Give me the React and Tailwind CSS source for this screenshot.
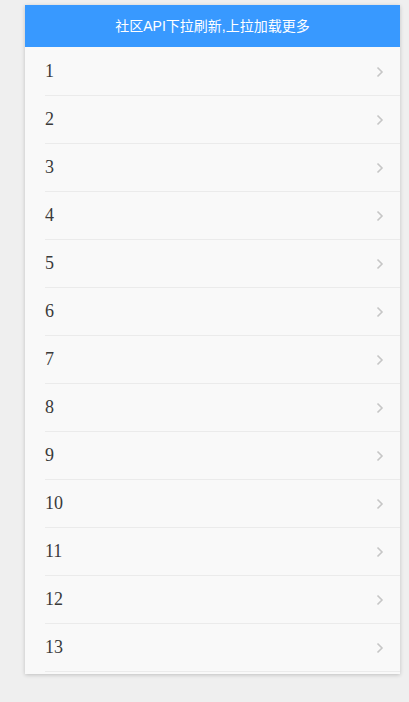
import React from "react";

const items = Array.from({ length: 13 }, (_, i) => i + 1);

export default function App() {
  return (
    <div className="min-h-[702px] w-[409px] bg-[#efefef] pt-[5px] pl-[25px]">
      <div className="w-[375px] bg-[#f9f9f9] pb-[2px] shadow-[0_1px_4px_rgba(0,0,0,0.2)]">
        <div
          className="flex h-[42px] items-center justify-center bg-[#3899ff] text-[14px] text-white"
          style={{ fontFamily: '"Liberation Sans", "Noto Sans CJK SC", sans-serif' }}
        >
          社区API下拉刷新,上拉加载更多
        </div>
        <div className="pl-[20px] pt-[1px]">
          {items.map((n) => (
            <div
              key={n}
              className="flex h-[48px] items-center justify-between border-b border-[#ebebeb] pr-[16px]"
            >
              <span
                className="text-[18px] text-[#3a3a3a]"
                style={{ fontFamily: '"Liberation Serif", serif' }}
              >
                {n}
              </span>
              <svg width="8" height="12" viewBox="0 0 8 12" className="mt-[1px]">
                <polyline
                  points="1.5,1.5 6,6 1.5,10.5"
                  fill="none"
                  stroke="#c6c6c6"
                  strokeWidth="1.6"
                />
              </svg>
            </div>
          ))}
        </div>
      </div>
    </div>
  );
}
